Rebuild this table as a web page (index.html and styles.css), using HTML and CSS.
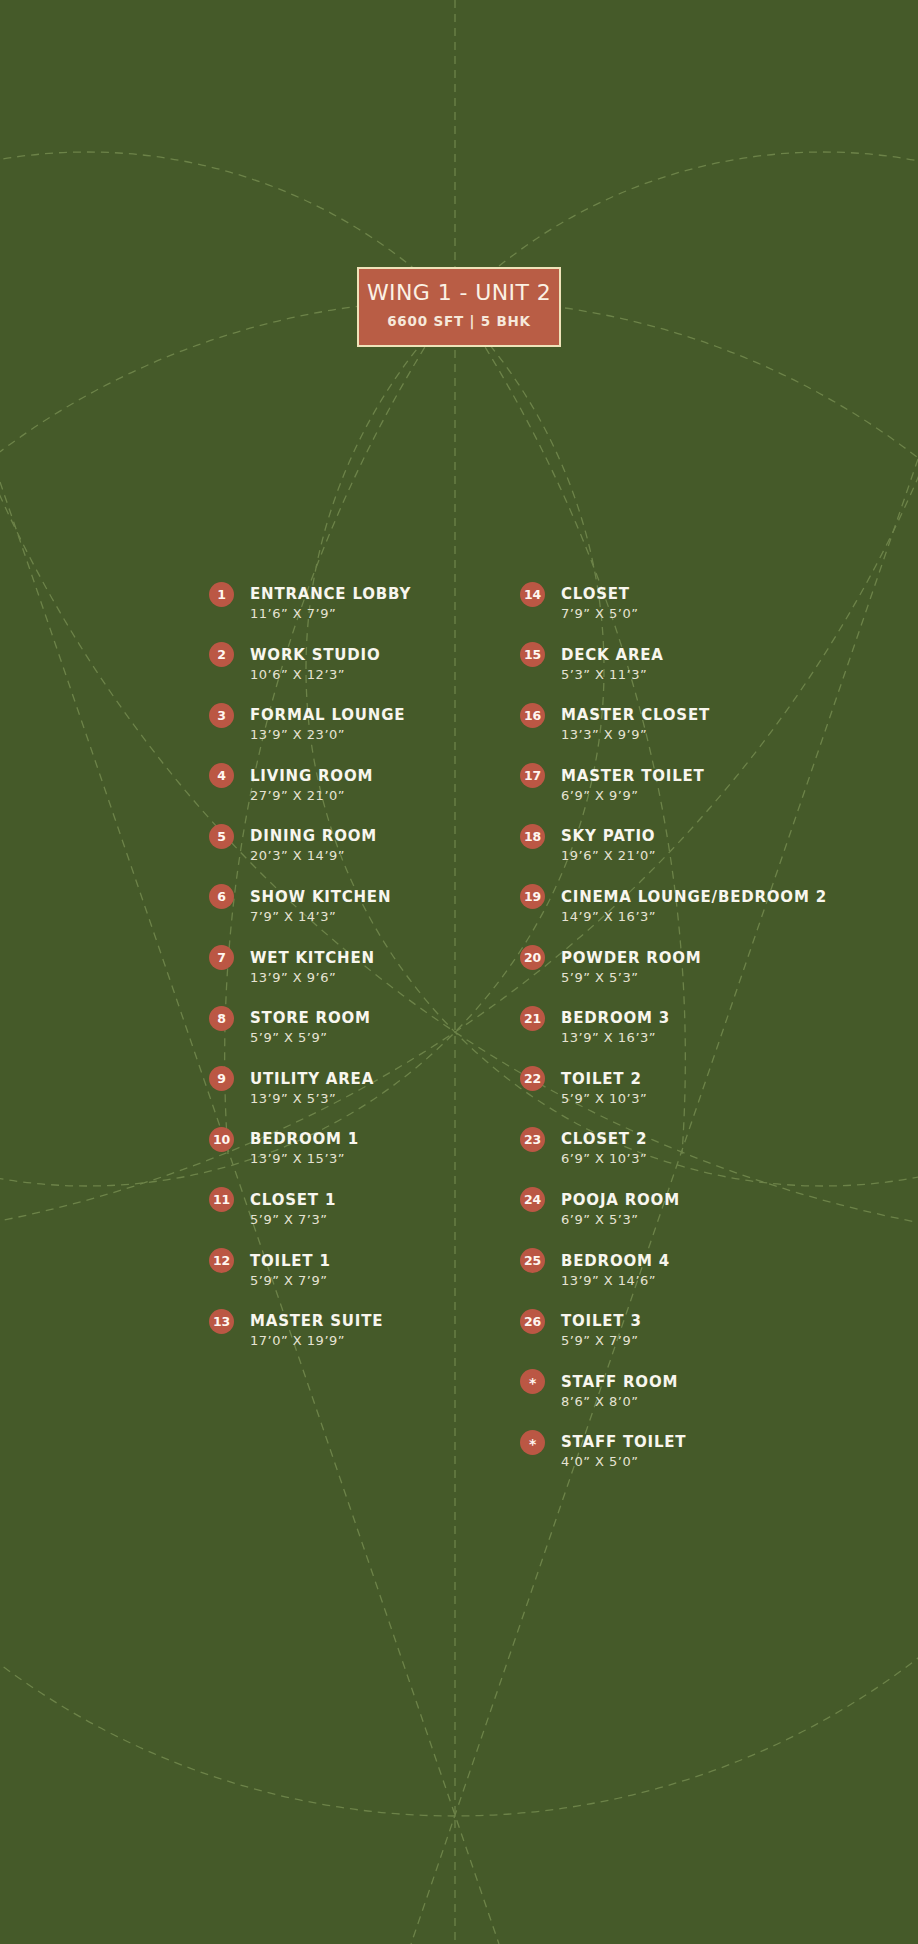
FILE: index.html
```html
<!DOCTYPE html>
<html lang="en">
<head>
<meta charset="utf-8">
<title>Wing 1 - Unit 2</title>
<link rel="stylesheet" href="styles.css">
</head>
<body>
<main class="page">
  <svg class="bg-lines" viewBox="0 0 918 1944" width="918" height="1944" aria-hidden="true">
    <g fill="none" stroke="#82995a" stroke-width="1.3" stroke-dasharray="8 6" opacity="0.65">
      <line x1="455" y1="0" x2="455" y2="1944"/>
      <circle cx="87" cy="669" r="517"/>
      <circle cx="823" cy="669" r="517"/>
      <circle cx="455" cy="1058" r="758"/>
      <path d="M455 300 A1364 1364 0 0 0 228 1154"/>
      <path d="M455 300 A1364 1364 0 0 1 682 1154"/>
      <line x1="0" y1="482" x2="499" y2="1944"/>
      <line x1="918" y1="459" x2="411" y2="1944"/>
      <circle cx="-252" cy="-29" r="1275"/>
      <circle cx="1162" cy="-29" r="1275"/>
    </g>
  </svg>

  <header class="unit-box">
    <h1 class="unit-title">WING 1 - UNIT 2</h1>
    <p class="unit-meta">6600 SFT | 5 BHK</p>
  </header>

  <section class="rooms">
    <ol class="room-col">
      <li class="room"><span class="badge">1</span><div><p class="room-name">ENTRANCE LOBBY</p><p class="room-size">11’6” X 7’9”</p></div></li>
      <li class="room"><span class="badge">2</span><div><p class="room-name">WORK STUDIO</p><p class="room-size">10’6” X 12’3”</p></div></li>
      <li class="room"><span class="badge">3</span><div><p class="room-name">FORMAL LOUNGE</p><p class="room-size">13’9” X 23’0”</p></div></li>
      <li class="room"><span class="badge">4</span><div><p class="room-name">LIVING ROOM</p><p class="room-size">27’9” X 21’0”</p></div></li>
      <li class="room"><span class="badge">5</span><div><p class="room-name">DINING ROOM</p><p class="room-size">20’3” X 14’9”</p></div></li>
      <li class="room"><span class="badge">6</span><div><p class="room-name">SHOW KITCHEN</p><p class="room-size">7’9” X 14’3”</p></div></li>
      <li class="room"><span class="badge">7</span><div><p class="room-name">WET KITCHEN</p><p class="room-size">13’9” X 9’6”</p></div></li>
      <li class="room"><span class="badge">8</span><div><p class="room-name">STORE ROOM</p><p class="room-size">5’9” X 5’9”</p></div></li>
      <li class="room"><span class="badge">9</span><div><p class="room-name">UTILITY AREA</p><p class="room-size">13’9” X 5’3”</p></div></li>
      <li class="room"><span class="badge">10</span><div><p class="room-name">BEDROOM 1</p><p class="room-size">13’9” X 15’3”</p></div></li>
      <li class="room"><span class="badge">11</span><div><p class="room-name">CLOSET 1</p><p class="room-size">5’9” X 7’3”</p></div></li>
      <li class="room"><span class="badge">12</span><div><p class="room-name">TOILET 1</p><p class="room-size">5’9” X 7’9”</p></div></li>
      <li class="room"><span class="badge">13</span><div><p class="room-name">MASTER SUITE</p><p class="room-size">17’0” X 19’9”</p></div></li>
    </ol>
    <ol class="room-col">
      <li class="room"><span class="badge">14</span><div><p class="room-name">CLOSET</p><p class="room-size">7’9” X 5’0”</p></div></li>
      <li class="room"><span class="badge">15</span><div><p class="room-name">DECK AREA</p><p class="room-size">5’3” X 11’3”</p></div></li>
      <li class="room"><span class="badge">16</span><div><p class="room-name">MASTER CLOSET</p><p class="room-size">13’3” X 9’9”</p></div></li>
      <li class="room"><span class="badge">17</span><div><p class="room-name">MASTER TOILET</p><p class="room-size">6’9” X 9’9”</p></div></li>
      <li class="room"><span class="badge">18</span><div><p class="room-name">SKY PATIO</p><p class="room-size">19’6” X 21’0”</p></div></li>
      <li class="room"><span class="badge">19</span><div><p class="room-name">CINEMA LOUNGE/BEDROOM 2</p><p class="room-size">14’9” X 16’3”</p></div></li>
      <li class="room"><span class="badge">20</span><div><p class="room-name">POWDER ROOM</p><p class="room-size">5’9” X 5’3”</p></div></li>
      <li class="room"><span class="badge">21</span><div><p class="room-name">BEDROOM 3</p><p class="room-size">13’9” X 16’3”</p></div></li>
      <li class="room"><span class="badge">22</span><div><p class="room-name">TOILET 2</p><p class="room-size">5’9” X 10’3”</p></div></li>
      <li class="room"><span class="badge">23</span><div><p class="room-name">CLOSET 2</p><p class="room-size">6’9” X 10’3”</p></div></li>
      <li class="room"><span class="badge">24</span><div><p class="room-name">POOJA ROOM</p><p class="room-size">6’9” X 5’3”</p></div></li>
      <li class="room"><span class="badge">25</span><div><p class="room-name">BEDROOM 4</p><p class="room-size">13’9” X 14’6”</p></div></li>
      <li class="room"><span class="badge">26</span><div><p class="room-name">TOILET 3</p><p class="room-size">5’9” X 7’9”</p></div></li>
      <li class="room"><span class="badge badge-star">*</span><div><p class="room-name">STAFF ROOM</p><p class="room-size">8’6” X 8’0”</p></div></li>
      <li class="room"><span class="badge badge-star">*</span><div><p class="room-name">STAFF TOILET</p><p class="room-size">4’0” X 5’0”</p></div></li>
    </ol>
  </section>
</main>
</body>
</html>
```

FILE: styles.css
```css
* {
  box-sizing: border-box;
}

html,
body {
  margin: 0;
  padding: 0;
  background: #455a29;
}

.page {
  position: relative;
  width: 918px;
  height: 1944px;
  overflow: hidden;
  background: #455a29;
  font-family: "DejaVu Sans", "Liberation Sans", sans-serif;
  color: #f6f3e8;
  display: flex;
  flex-direction: column;
}

.bg-lines {
  position: absolute;
  left: 0;
  top: 0;
  z-index: 0;
}

.unit-box {
  position: relative;
  z-index: 1;
  width: 204px;
  margin: 267px auto 0;
  padding: 11px 0 15px;
  border: 2px solid #efe3b9;
  background: #b95d45;
  text-align: center;
}

.unit-title {
  margin: 0;
  font-size: 22px;
  line-height: 26px;
  font-weight: 400;
  letter-spacing: 0.4px;
  color: #fbf1e4;
}

.unit-meta {
  margin: 6px 0 0;
  font-size: 13.5px;
  line-height: 18px;
  font-weight: 700;
  letter-spacing: 0.8px;
  color: #f6e8da;
}

.rooms {
  position: relative;
  z-index: 1;
  display: flex;
  margin-top: 237px;
  padding-left: 209px;
}

.room-col {
  list-style: none;
  margin: 0;
  padding: 0;
  width: 311px;
  display: flex;
  flex-direction: column;
  gap: 20.6px;
}

.room {
  display: flex;
  align-items: flex-start;
  gap: 16px;
}

.room p {
  margin: 0;
}

.badge {
  flex: 0 0 25px;
  width: 25px;
  height: 25px;
  margin-top: -2.5px;
  border-radius: 50%;
  background: #bb5744;
  color: #fff6f0;
  font-size: 12.5px;
  font-weight: 700;
  letter-spacing: -0.3px;
  display: flex;
  align-items: center;
  justify-content: center;
}

.badge-star {
  font-size: 14px;
  padding-top: 3px;
}

.room-name {
  font-size: 15px;
  line-height: 20px;
  font-weight: 700;
  letter-spacing: 0.8px;
  color: #f8f6ee;
}

.room-size {
  margin-top: 1px;
  font-size: 13px;
  line-height: 20px;
  letter-spacing: 0.5px;
  color: #e6e3d3;
}
```
